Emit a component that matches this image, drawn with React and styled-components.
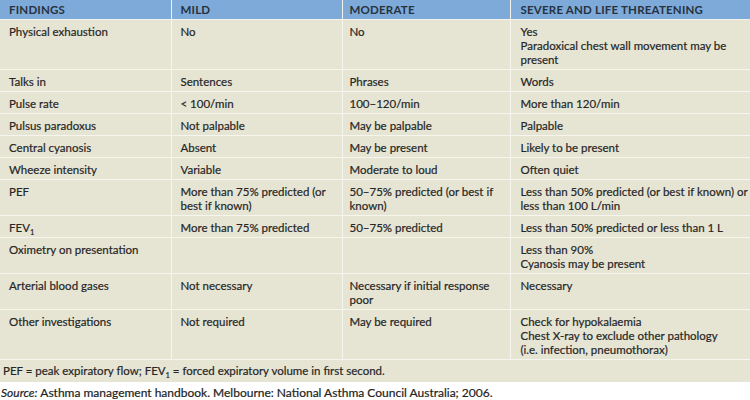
import React from "react";
import styled, { createGlobalStyle } from "styled-components";

const Global = createGlobalStyle`
  html, body {
    margin: 0;
    padding: 0;
    background: #ffffff;
  }
  body {
    font-family: Lato, "Open Sans", "Liberation Sans", sans-serif;
    color: #262626;
  }
`;

const Page = styled.div`
  width: 750px;
  height: 400px;
  overflow: hidden;
`;

const Table = styled.table`
  width: 750px;
  border-collapse: collapse;
  table-layout: fixed;
  background: #e6e5d4;
  font-size: 11.5px;
  -webkit-text-stroke: 0.2px;
`;

const Th = styled.th`
  background: #7eaad9;
  color: #27323e;
  text-align: left;
  font-weight: 700;
  font-size: 11.5px;
  letter-spacing: 0.2px;
  line-height: 14px;
  padding: 3px 4px 2px ${(p) => p.$pl || 9}px;
  white-space: nowrap;
  -webkit-text-stroke: 0;
  border-left: 1px solid #f2f2ea;
  border-bottom: 1px solid #f2f2ea;
  &:first-child {
    border-left: none;
  }
`;

const Td = styled.td`
  vertical-align: top;
  line-height: 14px;
  white-space: nowrap;
  padding: 5px 4px 2px ${(p) => p.$pl || 9}px;
  border-left: 1px solid #f7f6ee;
  border-bottom: 1px solid #f7f6ee;
  &:first-child {
    border-left: none;
  }
`;

const Foot = styled.td`
  padding: 4px 3px 4px;
  line-height: 14px;
`;

const Sub = styled.span`
  font-size: 7.5px;
  line-height: 0;
  position: relative;
  top: 3px;
`;

const Source = styled.p`
  margin: 0;
  padding: 3px 1px 0;
  font-size: 12px;
  line-height: 16px;
  color: #222;
  white-space: nowrap;
  -webkit-text-stroke: 0.2px;
  em {
    font-style: italic;
  }
`;

const FEV = () => (
  <>
    FEV<Sub>1</Sub>
  </>
);

const rows = [
  { cells: ["Physical exhaustion", "No", "No", ["Yes", "Paradoxical chest wall movement may be", "present"]] },
  { cells: ["Talks in", "Sentences", "Phrases", "Words"] },
  { cells: ["Pulse rate", "< 100/min", "100–120/min", "More than 120/min"] },
  { cells: ["Pulsus paradoxus", "Not palpable", "May be palpable", "Palpable"] },
  { cells: ["Central cyanosis", "Absent", "May be present", "Likely to be present"] },
  { cells: ["Wheeze intensity", "Variable", "Moderate to loud", "Often quiet"] },
  {
    cells: [
      "PEF",
      ["More than 75% predicted (or", "best if known)"],
      ["50–75% predicted (or best if", "known)"],
      ["Less than 50% predicted (or best if known) or", "less than 100 L/min"],
    ],
  },
  { cells: [<FEV key="f" />, "More than 75% predicted", "50–75% predicted", "Less than 50% predicted or less than 1 L"] },
  { cells: ["Oximetry on presentation", "", "", ["Less than 90%", "Cyanosis may be present"]] },
  { cells: ["Arterial blood gases", "Not necessary", ["Necessary if initial response", "poor"], "Necessary"] },
  {
    cells: [
      "Other investigations",
      "Not required",
      "May be required",
      ["Check for hypokalaemia", "Chest X-ray to exclude other pathology", "(i.e. infection, pneumothorax)"],
    ],
  },
];

const pads = [9, 9, 7, 10];

const Cell = ({ value, pl }) => (
  <Td $pl={pl}>
    {Array.isArray(value)
      ? value.map((line, i) => (
          <React.Fragment key={i}>
            {i > 0 && <br />}
            {line}
          </React.Fragment>
        ))
      : value}
  </Td>
);

export default function App() {
  return (
    <Page>
      <Global />
      <Table>
        <colgroup>
          <col style={{ width: 171 }} />
          <col style={{ width: 171 }} />
          <col style={{ width: 168 }} />
          <col style={{ width: 240 }} />
        </colgroup>
        <thead>
          <tr>
            <Th $pl={9}>FINDINGS</Th>
            <Th $pl={9}>MILD</Th>
            <Th $pl={7}>MODERATE</Th>
            <Th $pl={10}>SEVERE AND LIFE THREATENING</Th>
          </tr>
        </thead>
        <tbody>
          {rows.map((r, i) => (
            <tr key={i}>
              {r.cells.map((c, j) => (
                <Cell key={j} value={c} pl={pads[j]} />
              ))}
            </tr>
          ))}
          <tr>
            <Foot colSpan={4}>
              PEF = peak expiratory flow; <FEV /> = forced expiratory volume in first second.
            </Foot>
          </tr>
        </tbody>
      </Table>
      <Source>
        <em>Source:</em> Asthma management handbook. Melbourne: National Asthma Council Australia; 2006.
      </Source>
    </Page>
  );
}
